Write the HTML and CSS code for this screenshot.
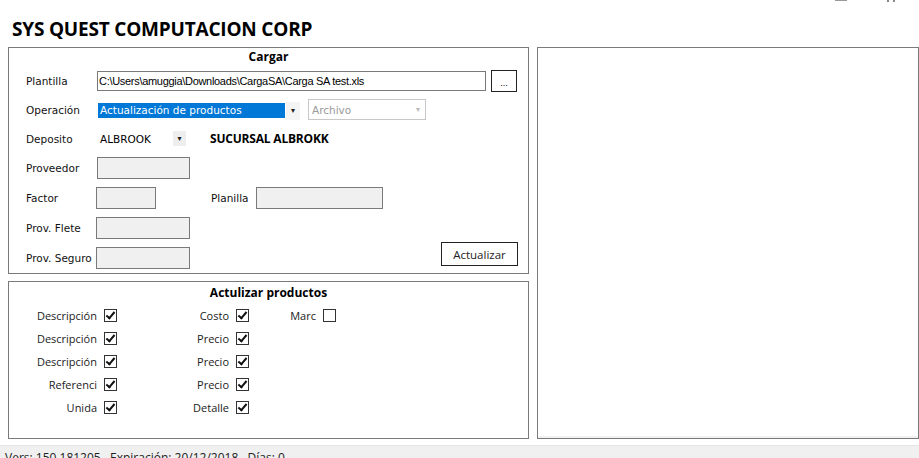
FILE: index.html
```html
<!DOCTYPE html>
<html lang="es">
<head>
  <meta charset="UTF-8">
  <title>SYS QUEST - Carga</title>
  <link rel="stylesheet" href="styles.css">
</head>
<body>
  <div class="window">
    <div class="chrome">
      <span class="min-line"></span>
      <span class="close-mark"><i></i><i></i></span>
    </div>
    <div class="title">SYS QUEST COMPUTACION CORP</div>

    <div class="main">
      <div class="left">
        <div class="panel cargar">
          <div class="panel-title">Cargar</div>
          <div class="form">
            <div class="row">
              <span class="label">Plantilla</span>
              <div class="path-input">C:\Users\amuggia\Downloads\CargaSA\Carga SA test.xls</div>
              <button class="dots-btn">...</button>
            </div>
            <div class="row">
              <span class="label">Operación</span>
              <div class="combo-op">
                <span class="combo-selected">Actualización de productos</span>
                <span class="combo-arrow">&#9662;</span>
              </div>
              <div class="combo-disabled">
                <span>Archivo</span>
                <span class="combo-arrow dim">&#9662;</span>
              </div>
            </div>
            <div class="row">
              <span class="label">Deposito</span>
              <div class="combo-dep">
                <span class="dep-text">ALBROOK</span>
                <span class="combo-arrow boxed">&#9662;</span>
              </div>
              <span class="sucursal">SUCURSAL ALBROKK</span>
            </div>
            <div class="row">
              <span class="label">Proveedor</span>
              <div class="field w93"></div>
            </div>
            <div class="row">
              <span class="label">Factor</span>
              <div class="field w60"></div>
              <span class="label planilla">Planilla</span>
              <div class="field w127"></div>
            </div>
            <div class="row">
              <span class="label">Prov. Flete</span>
              <div class="field w94"></div>
            </div>
            <div class="row last">
              <span class="label">Prov. Seguro</span>
              <div class="field w94"></div>
              <button class="btn-actualizar">Actualizar</button>
            </div>
          </div>
        </div>

        <div class="panel productos">
          <div class="panel-title">Actulizar productos</div>
          <div class="checks">
            <div class="check-col">
              <label class="check"><span>Descripción</span><span class="box on"></span></label>
              <label class="check"><span>Descripción</span><span class="box on"></span></label>
              <label class="check"><span>Descripción</span><span class="box on"></span></label>
              <label class="check"><span>Referenci</span><span class="box on"></span></label>
              <label class="check"><span>Unida</span><span class="box on"></span></label>
            </div>
            <div class="check-col">
              <label class="check"><span>Costo</span><span class="box on"></span></label>
              <label class="check"><span>Precio</span><span class="box on"></span></label>
              <label class="check"><span>Precio</span><span class="box on"></span></label>
              <label class="check"><span>Precio</span><span class="box on"></span></label>
              <label class="check"><span>Detalle</span><span class="box on"></span></label>
            </div>
            <div class="check-col">
              <label class="check"><span>Marc</span><span class="box"></span></label>
            </div>
          </div>
        </div>
      </div>

      <div class="panel preview"></div>
    </div>

    <div class="status">Vers: 150.181205&nbsp;&nbsp;&nbsp;Expiración: 20/12/2018&nbsp;&nbsp;&nbsp;Días: 0</div>
  </div>
</body>
</html>
```

FILE: styles.css
```css
* {
  margin: 0;
  padding: 0;
  box-sizing: border-box;
}

body {
  margin: 0;
  background: #fff;
  font-family: 'DejaVu Sans', Verdana, sans-serif;
  color: #000;
  overflow: hidden;
}

.window {
  width: 919px;
  height: 458px;
  display: flex;
  flex-direction: column;
  overflow: hidden;
}

.window > * {
  flex-shrink: 0;
}

.chrome {
  height: 8px;
  display: flex;
  justify-content: flex-end;
  align-items: flex-start;
  gap: 40px;
  padding-right: 24px;
}

.min-line {
  width: 12px;
  height: 1px;
  background: #999;
}

.close-mark {
  display: flex;
  gap: 4px;
}

.close-mark i {
  width: 2px;
  height: 2px;
  background: #888;
}

.title {
  height: 39px;
  padding: 10px 0 0 12px;
  font-family: 'Open Sans', sans-serif;
  font-weight: 700;
  font-size: 19px;
  line-height: 22px;
  letter-spacing: -0.2px;
}

.main {
  display: flex;
  gap: 8px;
  padding-left: 8px;
  height: 392px;
}

.left {
  width: 521px;
  display: flex;
  flex-direction: column;
  gap: 7px;
}

.panel {
  border: 1px solid #7a7a7a;
  background: #fff;
}

.panel-title {
  font-family: 'Open Sans', sans-serif;
  font-weight: 700;
  font-size: 12px;
  text-align: center;
  line-height: 18px;
}

.cargar {
  height: 227px;
}

.form {
  display: grid;
  grid-template-rows: 29px 29px 29px 30px 30px 30px 30px;
  padding-left: 17px;
}

.row {
  display: flex;
  align-items: center;
}

.label {
  width: 70px;
  font-size: 10.5px;
  color: #111;
}

.path-input {
  width: 389px;
  height: 20px;
  margin-left: 1px;
  border: 1px solid #7a7a7a;
  font-family: 'Liberation Sans', Arial, sans-serif;
  font-size: 11px;
  letter-spacing: -0.3px;
  line-height: 18px;
  padding-left: 1px;
  white-space: nowrap;
  overflow: hidden;
}

.dots-btn {
  width: 26px;
  height: 22px;
  margin-left: 5px;
  border: 1px solid #222;
  background: #fff;
  font-size: 9px;
  font-family: 'Liberation Sans', Arial, sans-serif;
  line-height: 14px;
  padding-top: 4px;
}

.combo-op {
  display: flex;
  align-items: center;
  height: 20px;
  margin-left: 2px;
  margin-top: 2px;
}

.combo-selected {
  width: 187px;
  height: 15px;
  background: #0078d7;
  color: #fff;
  font-size: 10.5px;
  line-height: 15px;
  padding-left: 2px;
  white-space: nowrap;
  overflow: hidden;
}

.combo-arrow {
  width: 14px;
  height: 18px;
  display: flex;
  align-items: center;
  justify-content: center;
  font-size: 8px;
  color: #222;
  background: #f4f4f4;
  margin-left: 1px;
}

.combo-arrow.dim {
  background: transparent;
  color: #bbb;
}

.combo-arrow.boxed {
  width: 13px;
  height: 15px;
  background: #eeeeee;
}

.combo-disabled {
  width: 118px;
  height: 21px;
  margin-left: 8px;
  border: 1px solid #c8c8c8;
  display: flex;
  align-items: center;
  justify-content: space-between;
  padding-left: 3px;
  color: #9a9a9a;
  font-size: 10.5px;
}

.combo-dep {
  display: flex;
  align-items: center;
  width: 114px;
  padding-left: 4px;
}

.dep-text {
  width: 72px;
  font-size: 10.5px;
}

.sucursal {
  font-family: 'Open Sans', sans-serif;
  font-weight: 700;
  font-size: 12px;
  letter-spacing: -0.2px;
}

.field {
  height: 22px;
  background: #f0f0f0;
  border: 1px solid #7a7a7a;
}

.w93 {
  width: 93px;
  margin-left: 1px;
}

.w60 {
  width: 60px;
}

.w94 {
  width: 94px;
}

.w127 {
  width: 127px;
}

.label.planilla {
  width: auto;
  margin-left: 55px;
  margin-right: 7px;
}

.btn-actualizar {
  width: 77px;
  height: 24px;
  margin-left: 251px;
  margin-top: -8px;
  border: 1px solid #222;
  background: #fff;
  font-family: 'Open Sans', sans-serif;
  font-size: 11.5px;
  color: #222;
}

.productos {
  height: 158px;
}

.productos .panel-title {
  line-height: 22px;
  height: 22px;
}

.checks {
  display: grid;
  grid-template-columns: 108px 132px 87px;
}

.check-col {
  display: flex;
  flex-direction: column;
}

.check {
  height: 23px;
  display: flex;
  align-items: center;
  justify-content: flex-end;
  gap: 7px;
  font-family: 'Open Sans', sans-serif;
  font-size: 11px;
  color: #222;
}

.box {
  width: 13px;
  height: 13px;
  border: 1px solid #333;
  background: #fff;
  position: relative;
}

.box.on::after {
  content: '';
  position: absolute;
  left: 3px;
  top: 0px;
  width: 3px;
  height: 7px;
  border-right: 2px solid #111;
  border-bottom: 2px solid #111;
  transform: rotate(40deg);
}

.preview {
  width: 382px;
  height: 392px;
  box-shadow: inset 0 -2px 0 #f2f2f2;
}

.status {
  margin-top: 6px;
  height: 30px;
  background: #f0f0f0;
  border-top: 1px solid #e6e6e6;
  font-family: 'Open Sans', sans-serif;
  font-size: 12px;
  line-height: 16px;
  padding: 4px 0 0 5px;
  color: #222;
  white-space: nowrap;
}
```
